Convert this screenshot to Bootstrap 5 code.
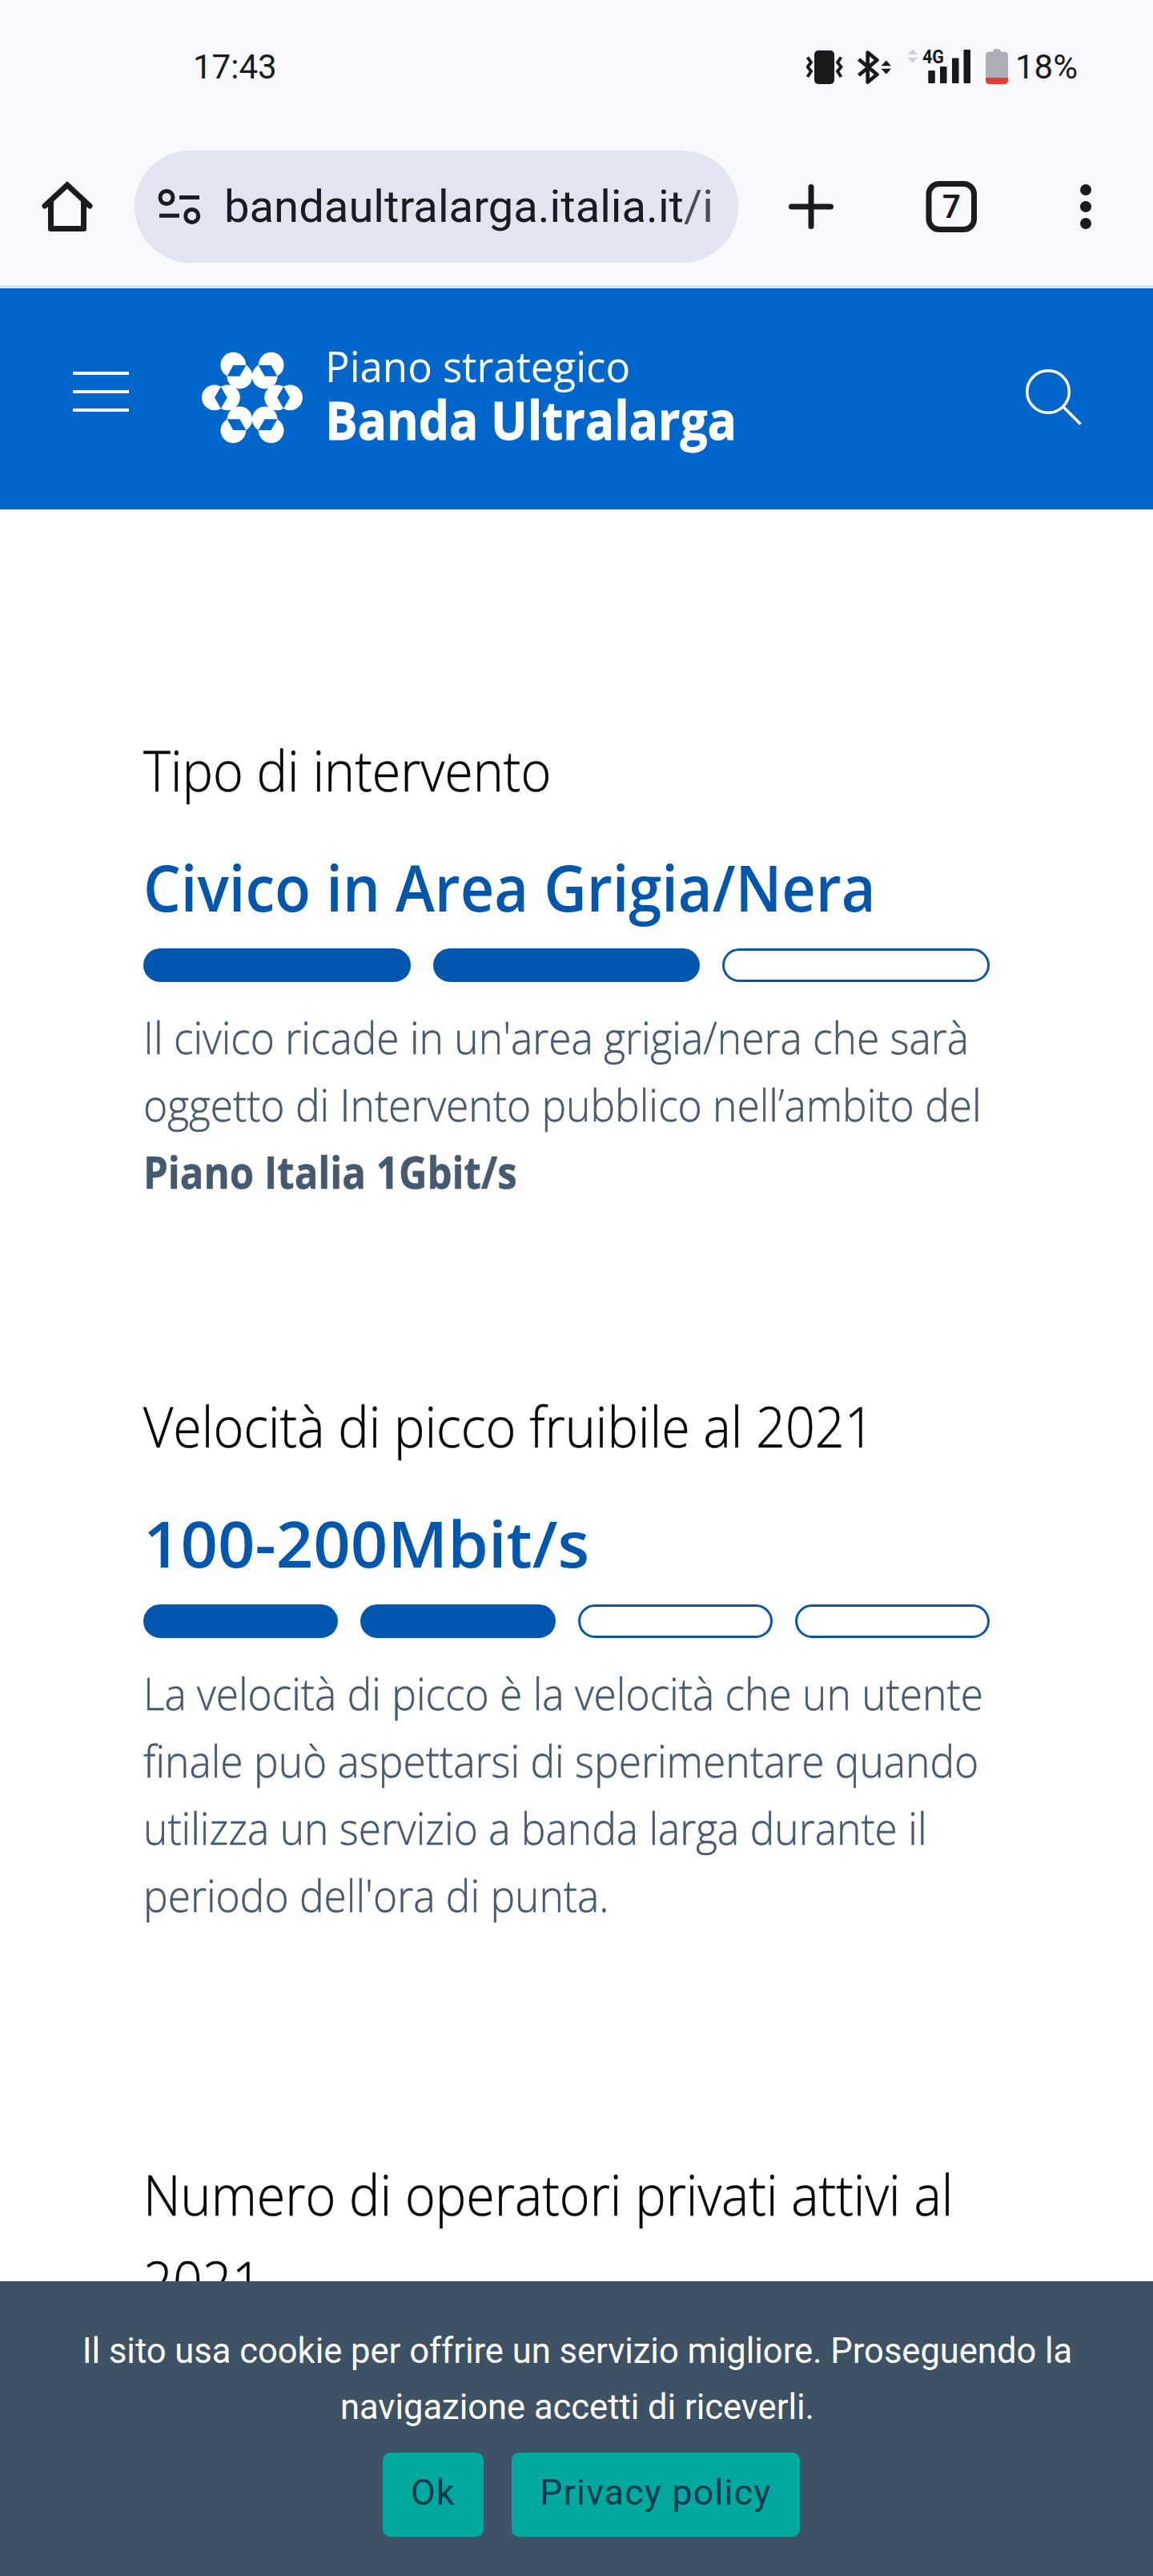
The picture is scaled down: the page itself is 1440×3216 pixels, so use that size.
<!DOCTYPE html>
<html lang="it">
<head>
<meta charset="utf-8">
<meta name="viewport" content="width=device-width, initial-scale=1">
<title>Piano strategico Banda Ultralarga</title>
<link href="https://cdn.jsdelivr.net/npm/bootstrap@5.3.0/dist/css/bootstrap.min.css" rel="stylesheet">
<style>
  body { background: #fff; height: 3216px; overflow: hidden; font-family: "Open Sans", "Noto Sans", sans-serif; }
  svg { display: block; flex: none; }

  /* phone status bar and browser toolbar */
  .chrome { background: #f9f8ff; height: 360px; border-bottom: 4px solid #dce4ec; font-family: Roboto, sans-serif; color: #1a1b20; }
  .status-row { height: 167px; padding: 0 94px 0 241px; font-size: 42px; line-height: 1; }
  .status-icons { column-gap: 18px; }
  .charge { margin-left: -9px; }
  .toolbar-row { height: 140px; margin-top: 21px; padding: 0 76px 0 50px; }
  .address { width: 754px; height: 140px; margin-left: 50px; padding-left: 28px; border-radius: 70px; background: #e2e4f1; font-size: 56.2px; line-height: 1; white-space: nowrap; }
  .address-path { color: #4b4c55; }

  /* site header */
  .site-header { background: #06c; height: 276px; padding: 0 88px 0 91px; color: #fff; white-space: nowrap; }
  .ham { margin-top: 104px; }
  .ham span { display: block; width: 70px; height: 3.6px; background: #fff; margin-bottom: 19.5px; }
  .brand-mark { margin: 79px 0 0 91px; }
  .brand-name { margin: 66px 0 0 28px; }
  .brand-top { font-size: 53px; line-height: 62px; transform: scaleX(.962); transform-origin: left; }
  .brand-main { font-size: 67px; line-height: 71px; transform: scaleX(.901); transform-origin: left; -webkit-text-stroke: .8px #fff; }
  .search-icon { margin-top: 101px; }

  /* results */
  .results { padding: 271px 204px 0 179px; }
  .narrow { transform: scaleX(.923); transform-origin: left; white-space: nowrap; }
  .topic { font-size: 70px; line-height: 108px; font-weight: 300; color: #000; margin: 0 0 32px; -webkit-text-stroke: .5px #000; }
  .answer { font-size: 80px; line-height: 120px; font-weight: 600; color: #0057ad; margin: 0 0 17px; }
  .answer-speed { transform: scaleX(1.017); }
  .meter { gap: 28px; height: 42px; margin-bottom: 26px; }
  .step { flex: 1 1 0; border: 3px solid #0b57a4; border-radius: 21px; }
  .step.on { background: #0057ad; border-color: #0057ad; }
  .note { font-size: 56px; line-height: 84px; font-weight: 300; color: #455a70; margin: 0; transform: scaleX(.919); -webkit-text-stroke: .5px #455a70; }
  .note strong { display: inline-block; font-weight: 700; transform: scaleX(.955); transform-origin: left; }
  .block-1 { margin-bottom: 222px; }
  .block-2 { margin-bottom: 278px; }

  /* cookie notice */
  .cookie { background: #3d5265; height: 368px; padding-top: 53px; font-family: Roboto, sans-serif; color: #fff; }
  .cookie p { font-size: 43.5px; line-height: 70px; margin-bottom: 21px; padding-left: 2px; }
  .cookie-btns { gap: 35px; padding-left: 37px; }
  .cookie .btn { height: 105px; padding: 0 0 4px; border: 0; border-radius: 9px; background: #00a99d; color: #08384f; font-size: 44.5px; letter-spacing: 1.3px; }
  .btn-ok { width: 126px; }
  .btn-privacy { width: 360px; }
</style>
</head>
<body>
<div class="chrome">
  <div class="status-row d-flex justify-content-between align-items-center">
    <span>17:43</span>
    <div class="status-icons d-flex align-items-center">
      <svg width="46" height="46" viewBox="1011 60 46 46" fill="none" stroke="#18191b" stroke-width="3.800">
        <rect x="1021" y="62" width="25" height="42" rx="5" fill="#18191b" stroke="none"/>
        <path d="M1012.500 70.500l4.500 6.500-4.500 5.500 4.500 5.500-4.500 7M1054.500 70.500l-4.500 6.500 4.500 5.500-4.500 5.500 4.500 7"/>
      </svg>
      <svg width="44" height="46" viewBox="1075 60 44 46">
        <path d="M1076.500 73l22.800 19-11.600 9.500V64.500L1099.300 74l-22.800 19" fill="none" stroke="#18191b" stroke-width="4.700" stroke-linejoin="round"/>
        <path d="M1104.500 81.300h12.500l-6.200-6.800zM1104.500 84.700h12.500l-6.200 6.800z" fill="#18191b"/>
      </svg>
      <svg width="80" height="46" viewBox="1132 60 80 46" fill="#18191b" overflow="visible">
        <path d="M1132.500 67h12.500l-6.200-6.500zM1132.500 71h12.500l-6.200 6.500z" fill="#d0cfd6"/>
        <text x="1151" y="78.300" font-family="Roboto, sans-serif" font-weight="700" font-size="24.500" textLength="27" lengthAdjust="spacingAndGlyphs">4G</text>
        <rect x="1158.300" y="87" width="8.500" height="16" rx="1"/>
        <rect x="1173" y="82" width="8.500" height="21" rx="1"/>
        <rect x="1188" y="71.500" width="8.500" height="31.500" rx="1"/>
        <rect x="1202.500" y="61" width="8.500" height="42" rx="1"/>
      </svg>
      <svg width="28" height="46" viewBox="1231 59 28 46">
        <path d="M1240 62.500q0-3.500 4-3.500h2q4 0 4 3.500h4q5 0 5 5V95h-28V67.500q0-5 5-5z" fill="#b0adb6"/>
        <path d="M1231 95h28v3q0 5-5 5h-18q-5 0-5-5z" fill="#e43d30"/>
      </svg>
      <span class="charge">18%</span>
    </div>
  </div>
  <div class="toolbar-row d-flex align-items-center">
    <svg width="68" height="68" viewBox="50 224 68 68" fill="none" stroke="#1a1b20" stroke-width="7" stroke-linecap="round" stroke-linejoin="round">
      <path d="M56 257L84 231l28 26" stroke-linejoin="miter"/><path d="M63.500 252v33.500h41V252"/>
    </svg>
    <div class="address d-flex align-items-center">
      <svg width="56" height="46" viewBox="196 235 56 46" fill="none" stroke="#1a1b20" stroke-width="5">
        <circle cx="208" cy="246.500" r="8"/><path d="M224 246.500h25M199 269.300h25"/><circle cx="239.700" cy="269.500" r="8"/>
      </svg>
      <span class="ms-4 ps-1">bandaultralarga.italia.it</span><span class="address-path">/i</span>
    </div>
    <svg width="442" height="68" viewBox="922 224 442 68" fill="none" stroke="#1a1b20" stroke-width="7">
      <path d="M1013 233.500v49M988.500 258h49" stroke-linecap="round"/>
      <rect x="1160" y="229.500" width="56.500" height="57" rx="13"/>
      <text x="1188.500" y="272" fill="#1a1b20" stroke="none" font-family="Roboto, sans-serif" font-weight="600" font-size="40" text-anchor="middle">7</text>
      <g fill="#1a1b20" stroke="none"><circle cx="1356" cy="237" r="7"/><circle cx="1356" cy="258" r="7"/><circle cx="1356" cy="279" r="7"/></g>
    </svg>
  </div>
</div>

<header class="site-header d-flex align-items-start">
  <div class="ham"><span></span><span></span><span></span></div>
  <svg class="brand-mark" width="126" height="114.700" viewBox="36 40 378 344">
    <defs>
      <g id="pairDiagonal"><circle cx="154" cy="90" r="47.500"/><circle cx="178" cy="132" r="47.500"/><path d="M154 91h48l-24 41h-47z" fill="#06c"/></g>
      <g id="pairSide"><circle cx="83.500" cy="212" r="47.500"/><circle cx="132" cy="212" r="47.500"/><path d="M107.500 171l24 41-24 41-23.500-41z" fill="#06c"/></g>
    </defs>
    <g fill="#fff">
      <use href="#pairDiagonal"/>
      <use href="#pairDiagonal" transform="translate(450 0) scale(-1 1)"/>
      <use href="#pairDiagonal" transform="translate(0 425) scale(1 -1)"/>
      <use href="#pairDiagonal" transform="translate(450 425) scale(-1 -1)"/>
      <use href="#pairSide"/>
      <use href="#pairSide" transform="translate(450 0) scale(-1 1)"/>
    </g>
  </svg>
  <div class="brand-name">
    <div class="brand-top">Piano strategico</div>
    <div class="brand-main fw-bold">Banda Ultralarga</div>
  </div>
  <svg class="search-icon ms-auto" width="71" height="72" viewBox="1281 461 71 72" fill="none" stroke="#fff" stroke-width="3.500">
    <circle cx="1309" cy="489" r="26.300"/><path d="M1328 508l21.500 21.500"/>
  </svg>
</header>

<main class="results">
  <section class="block-1">
    <h2 class="topic narrow">Tipo di intervento</h2>
    <h3 class="answer narrow">Civico in Area Grigia/Nera</h3>
    <div class="meter d-flex"><div class="step on"></div><div class="step on"></div><div class="step"></div></div>
    <p class="note narrow">Il civico ricade in un'area grigia/nera che sarà<br>oggetto di Intervento pubblico nell’ambito del<br><strong>Piano Italia 1Gbit/s</strong></p>
  </section>
  <section class="block-2">
    <h2 class="topic narrow">Velocità di picco fruibile al 2021</h2>
    <h3 class="answer narrow answer-speed">100-200Mbit/s</h3>
    <div class="meter d-flex"><div class="step on"></div><div class="step on"></div><div class="step"></div><div class="step"></div></div>
    <p class="note narrow">La velocità di picco è la velocità che un utente<br>finale può aspettarsi di sperimentare quando<br>utilizza un servizio a banda larga durante il<br>periodo dell'ora di punta.</p>
  </section>
  <section>
    <h2 class="topic narrow">Numero di operatori privati attivi al<br>2021</h2>
  </section>
</main>

<div class="cookie fixed-bottom text-center">
  <p>Il sito usa cookie per offrire un servizio migliore. Proseguendo la<br>navigazione accetti di riceverli.</p>
  <div class="cookie-btns d-flex justify-content-center">
    <button class="btn btn-ok" type="button">Ok</button>
    <button class="btn btn-privacy" type="button">Privacy policy</button>
  </div>
</div>
<script src="https://cdn.jsdelivr.net/npm/bootstrap@5.3.0/dist/js/bootstrap.bundle.min.js"></script>
</body>
</html>
